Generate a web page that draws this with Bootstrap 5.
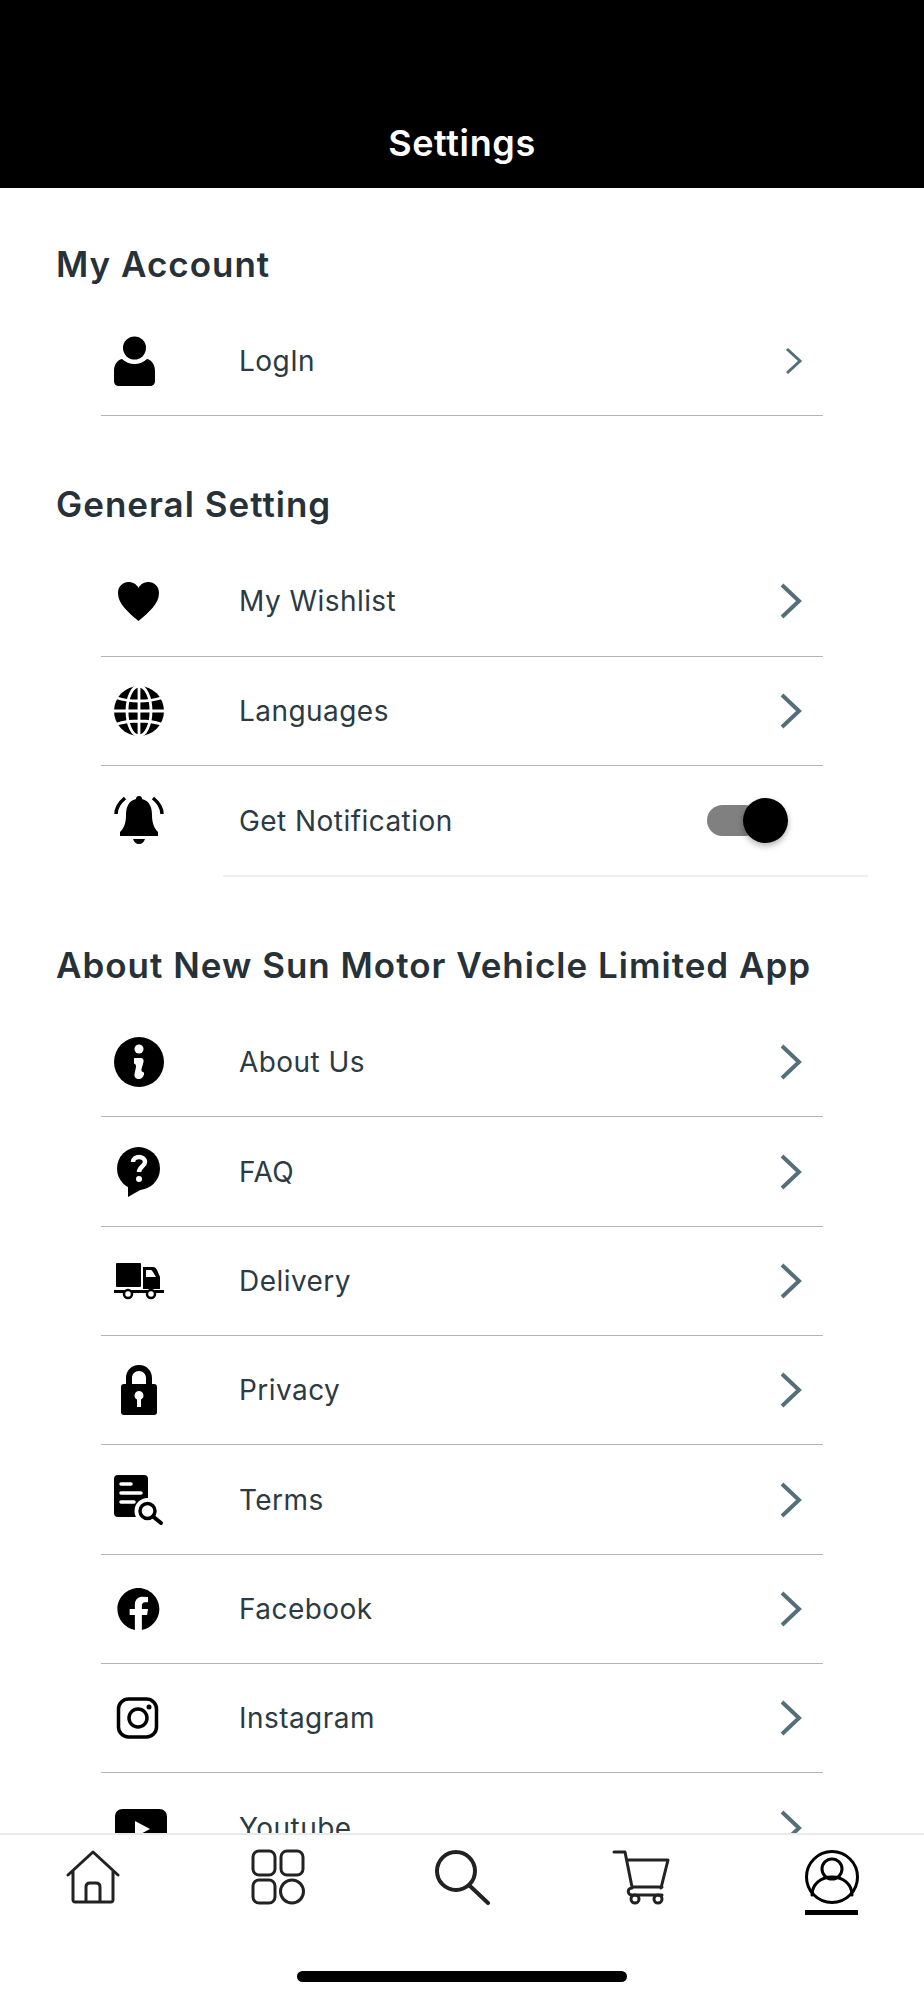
<!DOCTYPE html>
<html>

<head>
  <title>Settings</title>
  <link href="https://cdn.jsdelivr.net/npm/bootstrap@5.3.2/dist/css/bootstrap.min.css" rel="stylesheet">
  <script src="https://cdn.jsdelivr.net/npm/bootstrap@5.3.2/dist/js/bootstrap.bundle.min.js"></script>
  <style>
    body { font-family: Inter, "Liberation Sans", sans-serif; overflow: hidden; background: #fff; }
    .app-screen { height: 2000px; }
    .top-title { height: 188px; background: #000; padding-bottom: 25px; font-size: 36px; font-weight: 600; line-height: 40px; letter-spacing: .6px; }
    .scroll-area { height: 1645px; overflow: hidden; flex: none; }
    .group-title { margin: 0; padding-left: 56px; font-size: 35px; font-weight: 600; line-height: 44px; letter-spacing: 1px; color: #263238; }
    .group-title.first { margin-top: 54px; }
    .group-title.second { margin-top: 66px; }
    .group-title.third { margin-top: 66px; }
    .rows { margin: 21px 101px 0; }
    .set-row { height: 109.3px; border-bottom: 1px solid #b4b4b4; font-size: 28px; color: #2c3a42; letter-spacing: .45px; }
    .set-row.plain { border-bottom: 0; }
    .light-line { height: 2px; margin: 0 56px 0 223px; background: #eee; }
    .ic-box { width: 138px; padding-left: 13px; flex: none; }
    .ic-box svg { display: block; width: 50px; height: 50px; overflow: visible; }
    .chev { width: 24px; height: 38px; margin-right: 20px; fill: none; stroke: #546e7a; stroke-width: 4; }
    .chev.small { width: 18px; height: 28px; margin-right: 20px; stroke-width: 3; }
    .track { width: 53px; height: 31px; margin-right: 63px; background: #808080; border-radius: 16px; }
    .knob { width: 45px; height: 45px; margin-right: -28px; background: #000; border-radius: 50%; box-shadow: 0 3px 6px rgba(0,0,0,.3); flex: none; }
    .tab-bar { height: 167px; border-top: 2px solid #e9e9e9; background: #fff; flex: none; }
    .tab-row { padding: 14px 0 0 66px; }
    .tab-slot { flex: none; height: 56px; }
    .tab-slot svg { display: block; width: 100%; height: 100%; fill: none; stroke: #222; stroke-width: 3; stroke-linecap: round; stroke-linejoin: round; }
    .active-bar { width: 53px; height: 5px; margin: 5px 0 0 805px; background: #000; }
    .home-pill { width: 330px; height: 11px; margin: 56px auto 0; background: #000; border-radius: 6px; }
  </style>
</head>

<body>
  <div class="app-screen d-flex flex-column">
    <header class="top-title text-white d-flex align-items-end justify-content-center">Settings</header>

    <main class="scroll-area">
      <h2 class="group-title first">My Account</h2>
      <div class="rows">
        <div class="set-row d-flex align-items-center">
          <div class="ic-box">
            <svg viewBox="0 0 50 50"><circle cx="20.500" cy="12" r="11.500"/><path d="M8 23c3 3 8 5 12.500 5S30 26 33 23c5 1 8 6 8 12v10c0 3-2 5-5 5H5c-3 0-5-2-5-5V35c0-6 3-11 8-12z"/></svg>
          </div>
          <span class="flex-grow-1">LogIn</span>
          <svg class="chev small" viewBox="0 0 18 28"><path d="M2 2l13 12L2 26"/></svg>
        </div>
      </div>

      <h2 class="group-title second">General Setting</h2>
      <div class="rows">
        <div class="set-row d-flex align-items-center">
          <div class="ic-box">
            <svg viewBox="0 0 50 50"><path d="M24.500 45C14 36 4 28 4 17 4 10 9 6 14.500 6c4 0 8 2 10 6 2-4 6-6 10-6C40 6 45 10 45 17c0 11-10 19-20.500 28z"/></svg>
          </div>
          <span class="flex-grow-1">My Wishlist</span>
          <svg class="chev" viewBox="0 0 24 38"><path d="M3 3l17 16L3 35"/></svg>
        </div>
        <div class="set-row d-flex align-items-center">
          <div class="ic-box">
            <svg viewBox="0 0 50 50">
              <circle cx="25" cy="25" r="25"/>
              <g fill="none" stroke="#fff" stroke-width="2.800"><path d="M0 25h50M25 0v50M3 12c12 4 32 4 44 0M3 38c12-4 32-4 44 0"/><ellipse cx="25" cy="25" rx="12" ry="25"/></g>
            </svg>
          </div>
          <span class="flex-grow-1">Languages</span>
          <svg class="chev" viewBox="0 0 24 38"><path d="M3 3l17 16L3 35"/></svg>
        </div>
        <div class="set-row plain d-flex align-items-center">
          <div class="ic-box">
            <svg viewBox="0 0 50 50">
              <path d="M25 0c2 0 3 1 3 3 8 2 10 9 10 16 0 8 2 13 6 17v4H6v-4c4-4 6-9 6-17 0-7 2-14 10-16 0-2 1-3 3-3zM19 43h12c-1 3-3 5-6 5s-5-2-6-5z"/>
              <path d="M11 2C5 7 2 12 2 18M39 2c6 5 9 10 9 16" fill="none" stroke="#000" stroke-width="3.500"/>
            </svg>
          </div>
          <span class="flex-grow-1">Get Notification</span>
          <span class="track d-flex align-items-center justify-content-end"><span class="knob"></span></span>
        </div>
      </div>
      <div class="light-line"></div>

      <h2 class="group-title third">About New Sun Motor Vehicle Limited App</h2>
      <div class="rows">
        <div class="set-row d-flex align-items-center">
          <div class="ic-box">
            <svg viewBox="0 0 50 50">
              <circle cx="25" cy="25" r="25"/>
              <circle cx="25" cy="12" r="4.500" fill="#fff"/>
              <path fill="#fff" d="M20 21h7c2 0 3 2 2.500 4l-2 7c-.5 2 .5 3 2.500 3.500v2c-1 3-3 4.500-5 4.500-3 0-5-2-4.500-5l1.500-7c.3-2-.5-3-2-3.500z"/>
            </svg>
          </div>
          <span class="flex-grow-1">About Us</span>
          <svg class="chev" viewBox="0 0 24 38"><path d="M3 3l17 16L3 35"/></svg>
        </div>
        <div class="set-row d-flex align-items-center">
          <div class="ic-box">
            <svg viewBox="0 0 50 50">
              <circle cx="24.500" cy="21.500" r="21.500"/>
              <path d="M14 36v14l14-8z"/>
              <path d="M19 15c0-3 3-5 6-5s6 2 6 5c0 4-6 5-6 10" fill="none" stroke="#fff" stroke-width="4.500"/>
              <circle cx="25" cy="32" r="3" fill="#fff"/>
            </svg>
          </div>
          <span class="flex-grow-1">FAQ</span>
          <svg class="chev" viewBox="0 0 24 38"><path d="M3 3l17 16L3 35"/></svg>
        </div>
        <div class="set-row d-flex align-items-center">
          <div class="ic-box">
            <svg viewBox="0 0 50 50">
              <rect x="2" y="7" width="25" height="24" rx="1"/>
              <path fill-rule="evenodd" d="M29 11h10c2 0 3 1 4 3l3 7v12H29zm3 3v7h10l-3-5c-1-1-1-2-2-2z"/>
              <path d="M0 34h50v3H0z"/>
              <circle cx="14" cy="38" r="4" fill="#fff" stroke="#000" stroke-width="2.500"/>
              <circle cx="37" cy="38" r="4" fill="#fff" stroke="#000" stroke-width="2.500"/>
            </svg>
          </div>
          <span class="flex-grow-1">Delivery</span>
          <svg class="chev" viewBox="0 0 24 38"><path d="M3 3l17 16L3 35"/></svg>
        </div>
        <div class="set-row d-flex align-items-center">
          <div class="ic-box">
            <svg viewBox="0 0 50 50"><path fill-rule="evenodd" d="M25 0c8 0 13 6 13 13v6h2c2 0 3 1 3 3v25c0 2-1 3-3 3H10c-2 0-3-1-3-3V22c0-2 1-3 3-3h2v-6C12 6 17 0 25 0zm0 6c-4 0-7 3-7 7v6h14v-6c0-4-3-7-7-7zm0 20a4.500 4.500 0 0 0-2 8.500V42h4v-7.500A4.500 4.500 0 0 0 25 26z"/></svg>
          </div>
          <span class="flex-grow-1">Privacy</span>
          <svg class="chev" viewBox="0 0 24 38"><path d="M3 3l17 16L3 35"/></svg>
        </div>
        <div class="set-row d-flex align-items-center">
          <div class="ic-box">
            <svg viewBox="0 0 50 50">
              <rect x="0" y="0" width="34" height="42" rx="4"/>
              <path d="M7 9h10M7 18h20M7 27h13" fill="none" stroke="#fff" stroke-width="3.500" stroke-linecap="round"/>
              <circle cx="33.500" cy="36" r="13" fill="#fff"/>
              <circle cx="33.500" cy="36" r="7.500" fill="none" stroke="#000" stroke-width="3.500"/>
              <path d="M39 41.500l8 6.500" fill="none" stroke="#000" stroke-width="4" stroke-linecap="round"/>
            </svg>
          </div>
          <span class="flex-grow-1">Terms</span>
          <svg class="chev" viewBox="0 0 24 38"><path d="M3 3l17 16L3 35"/></svg>
        </div>
        <div class="set-row d-flex align-items-center">
          <div class="ic-box">
            <svg viewBox="0 0 50 50"><path transform="translate(2.500 3) scale(.875)" d="M49 25c0-13-11-24-24-24S1 12 1 25c0 12 9 22 20 24V32h-6v-7h6v-5c0-6 4-9 9-9l6 .5v6h-3c-3 0-4 2-4 4V25h7l-1 7h-6v17c11-2 20-12 20-24z"/></svg>
          </div>
          <span class="flex-grow-1">Facebook</span>
          <svg class="chev" viewBox="0 0 24 38"><path d="M3 3l17 16L3 35"/></svg>
        </div>
        <div class="set-row d-flex align-items-center">
          <div class="ic-box">
            <svg viewBox="0 0 50 50"><g fill="none" stroke="#000" stroke-width="3.500"><rect x="4.500" y="6" width="38" height="38" rx="10"/><circle cx="24" cy="25" r="9"/></g><circle cx="35" cy="14" r="2.500"/></svg>
          </div>
          <span class="flex-grow-1">Instagram</span>
          <svg class="chev" viewBox="0 0 24 38"><path d="M3 3l17 16L3 35"/></svg>
        </div>
        <div class="set-row plain d-flex align-items-center">
          <div class="ic-box">
            <svg viewBox="0 0 50 50"><path fill-rule="evenodd" d="M9 6h36c5 0 8 3 8 8v22c0 5-3 8-8 8H9c-5 0-8-3-8-8V14c0-5 3-8 8-8zm12 12v16l15-8z"/></svg>
          </div>
          <span class="flex-grow-1">Youtube</span>
          <svg class="chev" viewBox="0 0 24 38"><path d="M3 3l17 16L3 35"/></svg>
        </div>
      </div>
    </main>

    <nav class="tab-bar">
      <div class="tab-row d-flex">
        <div class="tab-slot" style="width:185px"><svg style="width:54px" viewBox="0 0 54 56"><path d="M2 26L27 3l25 23M7 22v29c0 1 1 2 2 2h36c1 0 2-1 2-2V22M20 53V38c0-3 2-4 4-4h6c2 0 4 1 4 4v15"/></svg></div>
        <div class="tab-slot" style="width:183px"><svg style="width:54px" viewBox="0 0 54 56"><rect x="2" y="2" width="22" height="24" rx="6"/><rect x="30" y="2" width="22" height="24" rx="6"/><rect x="2" y="31" width="22" height="23" rx="6"/><circle cx="41" cy="42.500" r="11.500"/></svg></div>
        <div class="tab-slot" style="width:178px"><svg style="width:56px" viewBox="0 0 56 56"><circle cx="22" cy="22" r="19" stroke-width="4"/><path d="M36 37l18 17" stroke-width="4"/></svg></div>
        <div class="tab-slot" style="width:193px"><svg style="width:58px" viewBox="0 0 58 56"><path d="M2 3h11l7 35h30M15 11h41l-7 28M20 39c-5 0-5 7 0 7h30"/><circle cx="23" cy="50" r="4"/><circle cx="46" cy="50" r="4"/></svg></div>
        <div class="tab-slot" style="width:54px"><svg viewBox="0 0 54 56" style="stroke:#000"><circle cx="27" cy="28" r="25.500"/><circle cx="27" cy="20" r="10"/><path d="M7 46c0-11 9-18 20-18s20 7 20 18"/></svg></div>
      </div>
      <div class="active-bar"></div>
      <div class="home-pill"></div>
    </nav>
  </div>
</body>

</html>
